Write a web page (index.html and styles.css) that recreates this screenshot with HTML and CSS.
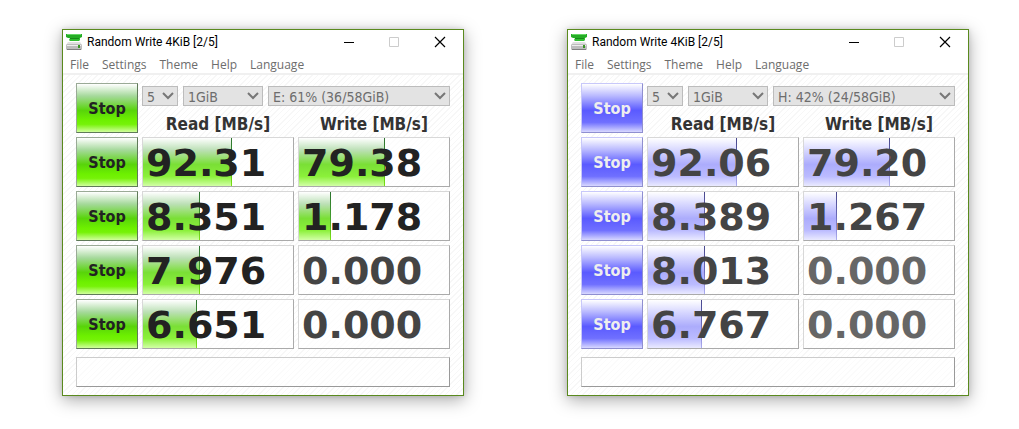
FILE: index.html
```html
<!DOCTYPE html>
<html lang="en">
<head>
<meta charset="utf-8">
<title>Random Write 4KiB [2/5]</title>
<link rel="stylesheet" href="styles.css">
</head>
<body>
<main class="desktop" id="desktop"></main>
<script src="app.js"></script>
</body>
</html>
```

FILE: styles.css
```css
* { box-sizing: border-box; }
body { margin: 0; background: #fff; font-family: "Open Sans", sans-serif; }
button, select, output { font: inherit; margin: 0; }
.desktop {
  display: grid;
  grid-template-columns: 1fr 1fr;
  gap: 103px;
  padding: 29px 50px 33px 62px;
}
.window {
  border: 1px solid #5a8a1e;
  background: #fff;
  box-shadow: 0 4px 16px rgba(0, 0, 0, .34), 0 0 5px rgba(0, 0, 0, .12);
}
.titlebar { display: flex; align-items: center; height: 24px; padding: 0 17px 0 3px; }
.app-icon { width: 16px; height: 16px; margin-right: 5px; }
.title { flex: 1; margin: 0; font: 12px/16px Roboto, sans-serif; color: #000; white-space: nowrap; }
.controls { display: flex; gap: 33px; }
.control { display: flex; padding: 0; border: 0; background: none; color: #000; }
.control:disabled { color: #ccc; }
.menu { display: flex; gap: 13px; height: 21px; padding: 2px 7px 0; border-bottom: 2px solid #f0f0f0; }
.menu-item { padding: 0; border: 0; background: none; font-size: 12px; line-height: 18px; color: #6d6d6d; }
.panel {
  padding: 8px 13px;
  background: repeating-linear-gradient(135deg, #f7f7f7 0 1px, #fff 1px 4px);
}
.grid { display: grid; grid-template-columns: 62px 1fr 1fr; grid-auto-rows: 50px; gap: 4px; }
.stop {
  padding: 2px 0 0;
  border: 1px solid;
  font: bold 16px/20px "DejaVu Sans Condensed", sans-serif;
}
.green .stop {
  border-color: #9aaa96 #5f7a58 #5f7a58 #9aaa96;
  color: #222;
  background: linear-gradient(#fff 0%, #a5d99b 25%, #58d40a 55%, #6df000 75%, #76f208 84%, #d0ff9c 100%);
}
.blue .stop {
  border-color: #c8c8fa #8f8fd0 #8f8fd0 #c8c8fa;
  color: #eee;
  background: linear-gradient(#fff 0%, #b8b8ff 25%, #5a5aff 55%, #7070ff 80%, #d8d8ff 100%);
}
.head { grid-column: 2 / 4; display: flex; flex-direction: column; gap: 8px; padding-top: 3px; }
.selects { display: flex; gap: 5px; }
.select {
  appearance: none;
  height: 20px;
  padding: 1px 4px 0;
  border: 1px solid #bcbcbc;
  border-radius: 0;
  background: #e3e3e3 url("data:image/svg+xml,%3Csvg xmlns='http://www.w3.org/2000/svg' width='12' height='8'%3E%3Cpath d='M1 1l5 5 5-5' fill='none' stroke='%23777' stroke-width='2'/%3E%3C/svg%3E") no-repeat right 3px center;
  color: #6d6d6d;
  opacity: 1;
  font: 14px/18px "DejaVu Sans Condensed", sans-serif;
}
.count { width: 36px; }
.size { width: 80px; }
.drive { flex: 1; min-width: 0; }
.labels { display: grid; grid-template-columns: 1fr 1fr; gap: 4px; }
.label { margin: 0; text-align: center; font: bold 17px/20px "DejaVu Sans Condensed", sans-serif; color: #333; }
.readout {
  display: grid;
  align-items: center;
  border: 1px solid;
  border-color: #d8d8d8 #aaa #aaa #d8d8d8;
  background: rgba(255, 255, 255, .6);
  overflow: hidden;
}
.bar, .value { grid-area: 1 / 1; }
.bar { height: 48px; border-right: 1px solid; }
.green .bar {
  background: linear-gradient(#fff 0%, #bce0b6 25%, #7adf36 55%, #8bf03a 80%, #d2ffa6 100%);
  border-image: linear-gradient(#2c7030, #3f9a2c 50%, #7ee610) 1;
}
.blue .bar {
  background: linear-gradient(#fff 0%, #d8d8ff 25%, #acacfc 55%, #bbbbff 80%, #eaeaff 100%);
  border-image: linear-gradient(#45458a, #6a6ab8 50%, #b0b0f4) 1;
}
.value { padding: 2px 0 0 3px; font: bold 38px/46px "DejaVu Sans", sans-serif; white-space: nowrap; }
.green .value { color: #222; }
.blue .value, .green .idle .value { color: #444; }
.blue .idle .value { color: #666; }
.status { height: 30px; margin-top: 8px; border: 1px solid; border-color: #ccc #999 #999 #ccc; background: rgba(255, 255, 255, .5); }
```

FILE: app.js
```js
const windows = [
  { theme: "green", drive: "E: 61% (36/58GiB)", rows: [
    ["92.31", 88, "79.38", 86], ["8.351", 57, "1.178", 32],
    ["7.976", 57, "0.000", 0], ["6.651", 54, "0.000", 0]] },
  { theme: "blue", drive: "H: 42% (24/58GiB)", rows: [
    ["92.06", 88, "79.20", 86], ["8.389", 57, "1.267", 33],
    ["8.013", 57, "0.000", 0], ["6.767", 54, "0.000", 0]] }
];
const icon = `<svg class="app-icon" viewBox="0 0 16 16" aria-hidden="true">
<path d="M0 0h16v3l-2 1H2L0 3z" fill="#25ad25"/><path d="M1 0h14v1H1z" fill="#67d767"/>
<path d="M4 4h10v2l-1 1H4L3 6z" fill="#2fbd2f"/><path d="M4 4h9v1H4z" fill="#188a18"/>
<path d="M2 8h12l2 3H0z" fill="#e0e0e0"/>
<rect y="10" width="16" height="6" rx="1.500" fill="#bdbdbd"/><path d="M1 11h14v1H1z" fill="#eee"/>
<path d="M1 15h14v1H1z" fill="#808080"/><path d="M12 11h2v3h-2z" fill="#3b9427"/></svg>`;
const bar = n => n ? `<div class="bar" style="width:${(n / 1.5).toFixed(0)}%"></div>` : "";
const readout = (v, n) => `<output class="readout${n ? "" : " idle"}">${bar(n)}<span class="value">${v}</span></output>`;
const stop = `<button class="stop">Stop</button>`;
document.getElementById("desktop").innerHTML = windows.map(w => `
<section class="window ${w.theme}">
<header class="titlebar">${icon}<h1 class="title">Random Write 4KiB [2/5]</h1>
<div class="controls">
<button class="control" aria-label="Minimize"><svg width="12" height="12"><path d="M0 6.5h10" stroke="currentColor"/></svg></button>
<button class="control" aria-label="Maximize" disabled><svg width="12" height="12"><path d="M.5 1.500h9v9h-9z" fill="none" stroke="currentColor"/></svg></button>
<button class="control" aria-label="Close"><svg width="12" height="12"><path d="M1 1l10 10M11 1L1 11" stroke="currentColor" stroke-width="1.200"/></svg></button>
</div></header>
<nav class="menu">${["File", "Settings", "Theme", "Help", "Language"].map(m => `<button class="menu-item">${m}</button>`).join("")}</nav>
<div class="panel"><div class="grid">${stop}
<div class="head"><div class="selects">
<select class="select count" aria-label="Test count" disabled><option>5</option></select>
<select class="select size" aria-label="Test size" disabled><option>1GiB</option></select>
<select class="select drive" aria-label="Drive" disabled><option>${w.drive}</option></select></div>
<div class="labels"><h2 class="label">Read [MB/s]</h2><h2 class="label">Write [MB/s]</h2></div></div>
${w.rows.map(r => stop + readout(r[0], r[1]) + readout(r[2], r[3])).join("")}
</div><div class="status" role="status"></div></div></section>`).join("");
```
